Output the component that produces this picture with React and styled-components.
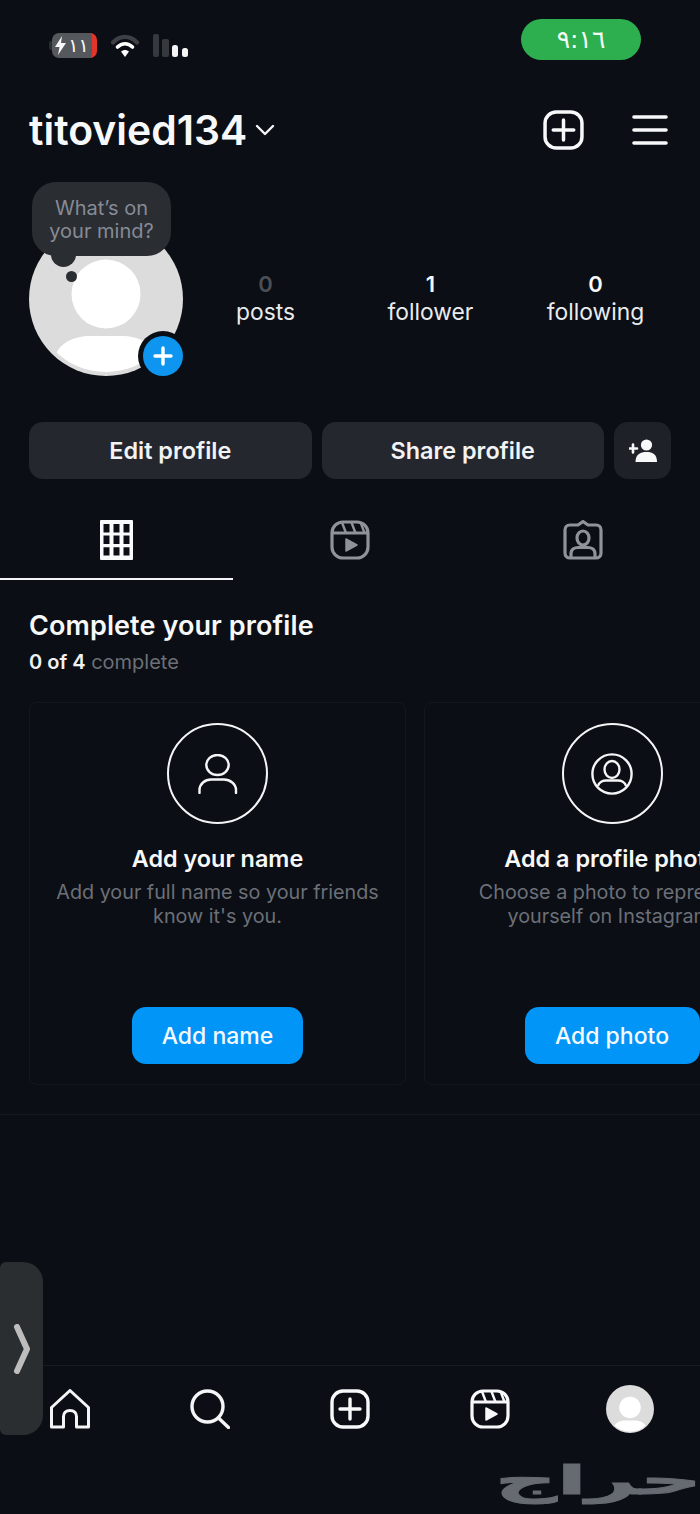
import React from "react";
import styled, { createGlobalStyle } from "styled-components";

const Global = createGlobalStyle`
  html, body { margin: 0; padding: 0; background: #0b0e14; }
  * { box-sizing: border-box; }
`;

const Page = styled.div`
  position: relative;
  width: 700px;
  height: 1514px;
  overflow: hidden;
  display: flex;
  flex-direction: column;
  background: #0b0e14;
  color: #f7f8f9;
  font-family: Inter, "Liberation Sans", sans-serif;
`;

const StatusBar = styled.div`
  display: flex;
  align-items: flex-start;
  padding: 19px 59px 0 49px;
  height: 60px;
`;
const StatusIcons = styled.div`
  display: flex;
  align-items: center;
  gap: 14px;
  margin-top: 14px;
`;
const Battery = styled.div`
  position: relative;
  width: 48px;
  height: 25px;
  padding-left: 3px;
  display: flex;
  align-items: center;
  &::before {
    content: "";
    position: absolute;
    left: 0;
    top: 8px;
    width: 3px;
    height: 9px;
    border-radius: 2px 0 0 2px;
    background: #2a2c30;
  }
`;
const BatteryBody = styled.div`
  flex: 1;
  height: 25px;
  border-radius: 7px;
  background: #55585c;
  border-right: 5px solid #e0352b;
  display: flex;
  align-items: center;
  justify-content: center;
  gap: 2px;
  font-family: "DejaVu Sans", sans-serif;
  font-size: 19px;
  line-height: 25px;
  color: #f7f7f7;
`;
const TimePill = styled.div`
  margin-left: auto;
  width: 120px;
  height: 41px;
  border-radius: 21px;
  background: #2daf4f;
  color: #f4fbf4;
  display: flex;
  align-items: center;
  justify-content: center;
  font-family: "DejaVu Sans", sans-serif;
  font-size: 25px;
  line-height: 41px;
`;

const Header = styled.header`
  display: flex;
  align-items: center;
  height: 44px;
  margin-top: 48px;
  padding: 0 32px 0 29px;
`;
const Username = styled.h1`
  margin: 0;
  font-size: 40.9px;
  line-height: 44px;
  font-weight: 600;
`;
const HeaderActions = styled.div`
  margin-left: auto;
  display: flex;
  align-items: center;
  gap: 48px;
`;

const ProfileRow = styled.section`
  display: flex;
  align-items: center;
  margin-top: 70px;
  padding-left: 29px;
`;
const AvatarWrap = styled.div`
  position: relative;
  width: 154px;
  height: 154px;
  flex: none;
`;
const Bubble = styled.div`
  position: absolute;
  left: 3px;
  top: -40px;
  width: 139px;
  height: 74px;
  border-radius: 24px;
  background: #2a2d32;
  color: #868b96;
  font-size: 20px;
  line-height: 23px;
  text-align: center;
  padding-top: 15px;
  &::before {
    content: "";
    position: absolute;
    left: 19px;
    top: 62px;
    width: 25px;
    height: 23px;
    border-radius: 0 0 13px 13px;
    background: #2a2d32;
  }
  &::after {
    content: "";
    position: absolute;
    left: 34px;
    top: 89px;
    width: 11px;
    height: 11px;
    border-radius: 50%;
    background: #2a2d32;
  }
`;
const BubbleText = styled.div`
  position: relative;
  z-index: 1;
`;
const AddBadge = styled.div`
  position: absolute;
  right: -5px;
  bottom: -5px;
  width: 50px;
  height: 50px;
  border-radius: 50%;
  background: #0b0e14;
  display: flex;
  align-items: center;
  justify-content: center;
  &::before {
    content: "";
    position: absolute;
    inset: 5px;
    border-radius: 50%;
    background: #0d95f0;
  }
  svg { position: relative; }
`;
const Stats = styled.div`
  display: grid;
  grid-template-columns: repeat(3, 165px);
  padding-bottom: 2px;
`;
const Stat = styled.div`
  text-align: center;
  display: flex;
  flex-direction: column;
  align-items: center;
  gap: 2px;
`;
const StatValue = styled.div`
  font-size: 22px;
  line-height: 26px;
  font-weight: 600;
  color: ${(p) => (p.$muted ? "#4c4f55" : "#f7f8f9")};
`;
const StatLabel = styled.div`
  font-size: 22.8px;
  line-height: 26px;
  color: #e9ebee;
`;

const ButtonRow = styled.div`
  display: flex;
  gap: 10px;
  margin-top: 46px;
  padding: 0 29px;
`;
const GreyButton = styled.div`
  flex: ${(p) => (p.$icon ? "0 0 57px" : "1")};
  height: 57px;
  border-radius: 14px;
  background: ${(p) => (p.$icon ? "#1e2128" : "#24272e")};
  display: flex;
  align-items: center;
  justify-content: center;
  font-size: 23.4px;
  font-weight: 600;
  color: #f2f3f5;
`;

const Tabs = styled.nav`
  display: grid;
  grid-template-columns: repeat(3, 1fr);
  margin-top: 21px;
`;
const Tab = styled.div`
  height: 80px;
  padding-top: 20px;
  display: flex;
  justify-content: center;
  align-items: flex-start;
  border-bottom: 2px solid ${(p) => (p.$active ? "#f4f5f6" : "transparent")};
`;

const Section = styled.section`
  padding: 30px 0 0 29px;
`;
const SectionTitle = styled.h2`
  margin: 0;
  font-size: 27px;
  line-height: 32px;
  font-weight: 600;
  letter-spacing: 0.1px;
`;
const Progress = styled.p`
  margin: 7px 0 0;
  font-size: 20px;
  line-height: 26px;
  color: #6c7078;
  b { font-weight: 600; color: #eef0f2; }
`;
const CardRow = styled.div`
  display: flex;
  gap: 18px;
  margin-top: 27px;
`;
const Card = styled.article`
  flex: none;
  width: ${(p) => p.$w}px;
  height: 383px;
  border: 1px solid #14171e;
  border-radius: 8px;
  padding-top: 20px;
  display: flex;
  flex-direction: column;
  align-items: center;
  text-align: center;
`;
const IconCircle = styled.div`
  width: 101px;
  height: 101px;
  border-radius: 50%;
  border: 2.5px solid #f4f5f6;
  display: flex;
  align-items: center;
  justify-content: center;
`;
const CardTitle = styled.h3`
  margin: 20px 0 0;
  font-size: 23.4px;
  line-height: 30px;
  font-weight: 600;
  white-space: nowrap;
`;
const CardText = styled.p`
  margin: 6px 0 0;
  font-size: 19.75px;
  line-height: 24px;
  color: #6c7078;
  white-space: nowrap;
`;
const BlueButton = styled.div`
  margin-top: auto;
  margin-bottom: 20px;
  width: ${(p) => p.$w}px;
  height: 57px;
  border-radius: 14px;
  background: #0095f6;
  display: flex;
  align-items: center;
  justify-content: center;
  font-size: 23px;
  font-weight: 500;
  color: #f4f9fe;
`;
const Divider = styled.hr`
  margin: 29px 0 0;
  border: 0;
  border-top: 1px solid #15181f;
`;

const BottomNav = styled.nav`
  margin-top: auto;
  height: 149px;
  border-top: 1px solid #181b22;
  padding-top: 23px;
  display: grid;
  grid-template-columns: repeat(5, 140px);
  align-items: start;
  justify-items: center;
`;
const NavAvatar = styled.div`
  margin-top: -4px;
`;
const SideHandle = styled.div`
  position: absolute;
  left: 0;
  top: 1262px;
  width: 43px;
  height: 173px;
  border-radius: 6px 20px 20px 6px;
  background: #2b2e31;
  display: flex;
  align-items: center;
  padding-left: 12px;
`;
const Watermark = styled.div`
  position: absolute;
  left: 502px;
  top: 1457px;
  width: 193px;
  height: 46px;
  display: flex;
  align-items: center;
  justify-content: center;
  direction: rtl;
  font-family: "DejaVu Sans", sans-serif;
  font-weight: 700;
  font-size: 40px;
  line-height: 46px;
  color: #666a71;
  -webkit-text-stroke: 1px #666a71;
  white-space: nowrap;
  transform: scaleX(2.15);
`;

const Wifi = () => (
  <svg width="28" height="24" viewBox="0 0 28 24" fill="none" strokeLinecap="round">
    <path d="M2 8.5 C9 1 19 1 26 8.5" stroke="#3c3f43" strokeWidth="4.4" />
    <path d="M6.5 13 C11 8.6 17 8.6 21.5 13" stroke="#fff" strokeWidth="3.6" />
    <path d="M10 17.5 L14 23 L18 17.5 C15.5 15.4 12.5 15.4 10 17.5Z" fill="#fff" />
  </svg>
);
const Signal = () => (
  <svg width="36" height="23" viewBox="0 0 36 23">
    <rect x="0" y="0" width="6" height="23" rx="2" fill="#35383c" />
    <rect x="9" y="5" width="7" height="18" rx="2" fill="#35383c" />
    <rect x="19" y="11" width="6" height="12" rx="2.5" fill="#f4f4f4" />
    <rect x="29" y="14" width="6" height="9" rx="2.5" fill="#f4f4f4" />
  </svg>
);
const Bolt = () => (
  <svg width="11" height="19" viewBox="0 0 11 19">
    <path d="M7 0 L0 11 H4.5 L3 19 L11 7 H6Z" fill="#f7f7f7" />
  </svg>
);
const Chevron = () => (
  <svg width="20" height="12" viewBox="0 0 20 12" fill="none" stroke="#f4f5f6" strokeWidth="2.4" strokeLinecap="round" strokeLinejoin="round" style={{ marginLeft: 8, marginTop: -1 }}>
    <path d="M2 2 L10 10 L18 2" />
  </svg>
);
const PlusSquare = ({ w = 40, h = 40 }) => (
  <svg width={w} height={h} viewBox="0 0 40 40" fill="none" stroke="#f7f8f9" strokeWidth="3.4" strokeLinecap="round" preserveAspectRatio="none">
    <rect x="2" y="2" width="36" height="36" rx="11" />
    <path d="M20 10 V30 M10 20 H30" />
  </svg>
);
const Menu = () => (
  <svg width="36" height="30" viewBox="0 0 36 30" stroke="#f7f8f9" strokeWidth="3.6" strokeLinecap="round">
    <path d="M2 2 H34 M2 15 H34 M2 28 H34" />
  </svg>
);
const DefaultAvatar = ({ size }) => (
  <svg width={size} height={size} viewBox="0 0 154 154" style={{ display: "block" }}>
    <defs>
      <clipPath id={`c${size}`}><circle cx="77" cy="77" r="73" /></clipPath>
    </defs>
    <circle cx="77" cy="77" r="77" fill="#dcdcdc" />
    <circle cx="77" cy="72" r="34.5" fill="#fff" />
    <g clipPath={`url(#c${size})`}>
      <path d="M26 136 C28 122 44 114 62 114 H92 C110 114 126 122 128 136 V154 H26Z" fill="#fff" />
    </g>
  </svg>
);
const AddPerson = () => (
  <svg width="28" height="23" viewBox="0 0 28 23" fill="#f7f8f9">
    <circle cx="17.5" cy="6" r="5.6" />
    <path d="M6.5 23 C6.5 15.5 11 13 17.5 13 C24 13 28 15.5 28 23Z" />
    <path d="M0 9.5 H8 M4 5.5 V13.5" stroke="#f7f8f9" strokeWidth="2.6" strokeLinecap="round" />
  </svg>
);
const cell = (x, y) => `M${x} ${y} V${y + 8.4} H${x + 6} V${y}Z`;
const GridIcon = () => {
  const xs = [3.5, 13.5, 23.5];
  const ys = [4, 15.6, 27.2];
  const cells = ys.flatMap((y) => xs.map((x) => cell(x, y))).join(" ");
  return (
    <svg width="33" height="40" viewBox="0 0 33 40" style={{ display: "block" }}>
      <path
        fillRule="evenodd"
        fill="#f9fafb"
        d={`M1 0 H32 a1 1 0 0 1 1 1 V39 a1 1 0 0 1 -1 1 H1 a1 1 0 0 1 -1 -1 V1 a1 1 0 0 1 1 -1Z ${cells}`}
      />
    </svg>
  );
};
const ReelIcon = ({ color }) => (
  <svg width="40" height="40" viewBox="0 0 40 40" fill="none" stroke={color} strokeWidth="3.2" strokeLinejoin="round" style={{ display: "block" }}>
    <rect x="2" y="2" width="36" height="36" rx="11" />
    <path d="M2.5 13 H37.5" />
    <path d="M12 2.5 L16 13 M21.5 2.5 L25.5 13 M31 3.5 L34.5 13" strokeWidth="2.4" />
    <path d="M16 19 L27 25 L16 31Z" fill={color} strokeWidth="1.5" />
  </svg>
);
const TagIcon = () => (
  <svg width="40" height="40" viewBox="0 0 40 40" fill="none" stroke="#8f939a" strokeWidth="3.2" strokeLinejoin="round" style={{ display: "block" }}>
    <path d="M7 5 H15 L20 1.5 L25 5 H33 C36 5 38 7 38 10 V33 C38 36 36 38 33 38 H7 C4 38 2 36 2 33 V10 C2 7 4 5 7 5Z" />
    <ellipse cx="20" cy="18" rx="6" ry="7" />
    <path d="M8 37 V34 C8 29 12 27.5 15 27.5 H25 C28 27.5 32 29 32 34 V37" />
  </svg>
);
const PersonLine = () => (
  <svg width="40" height="40" viewBox="0 0 40 40" fill="none" stroke="#f4f5f6" strokeWidth="2.4" strokeLinecap="round" style={{ display: "block" }}>
    <ellipse cx="19.5" cy="11" rx="11.2" ry="10" />
    <path d="M1.5 39 V36 C1.5 30 7 25.5 13 25.5 H26 C32 25.5 38 30 38 36 V39" />
  </svg>
);
const PersonCircle = () => (
  <svg width="42" height="42" viewBox="0 0 42 42" fill="none" stroke="#f4f5f6" strokeWidth="2.4" style={{ display: "block" }}>
    <circle cx="21" cy="21" r="19.6" />
    <ellipse cx="21" cy="16.5" rx="7.5" ry="8.5" />
    <path d="M7 33 C8 29 12 27.5 15 27.5 H27 C30 27.5 34 29 35 33" />
  </svg>
);
const HomeIcon = () => (
  <svg width="40" height="40" viewBox="0 0 40 40" fill="none" stroke="#f4f5f6" strokeWidth="3" strokeLinejoin="round" style={{ display: "block" }}>
    <path d="M20 1.5 L38.5 18.5 V38 H26.5 V27.5 C26.5 24 24 21.5 20 21.5 C16 21.5 13.5 24 13.5 27.5 V38 H1.5 V18.5Z" />
  </svg>
);
const SearchIcon = () => (
  <svg width="40" height="40" viewBox="0 0 40 40" fill="none" stroke="#f4f5f6" strokeWidth="3.4" strokeLinecap="round" style={{ display: "block" }}>
    <circle cx="17.5" cy="17.5" r="15.5" />
    <path d="M28.5 29 L38.5 38.5" />
  </svg>
);
const HandleChevron = () => (
  <svg width="20" height="50" viewBox="0 0 20 50" fill="none" stroke="#bdbdbd" strokeWidth="6" strokeLinecap="round" strokeLinejoin="round" style={{ display: "block" }}>
    <path d="M5 3 L15 25 L5 47" />
  </svg>
);
const SmallPlus = () => (
  <svg width="20" height="20" viewBox="0 0 20 20" stroke="#fff" strokeWidth="3.4" strokeLinecap="round">
    <path d="M10 2 V18 M2 10 H18" />
  </svg>
);

export default function App() {
  return (
    <Page>
      <Global />
      <StatusBar>
        <StatusIcons>
          <Battery>
            <BatteryBody dir="ltr">
              <Bolt />
              <span>١١</span>
            </BatteryBody>
          </Battery>
          <Wifi />
          <Signal />
        </StatusIcons>
        <TimePill>٩:١٦</TimePill>
      </StatusBar>

      <Header>
        <Username>titovied134</Username>
        <Chevron />
        <HeaderActions>
          <PlusSquare w={41} h={40} />
          <Menu />
        </HeaderActions>
      </Header>

      <ProfileRow>
        <AvatarWrap>
          <DefaultAvatar size={154} />
          <Bubble>
            <BubbleText>What’s on<br />your mind?</BubbleText>
          </Bubble>
          <AddBadge><SmallPlus /></AddBadge>
        </AvatarWrap>
        <Stats>
          <Stat><StatValue $muted>0</StatValue><StatLabel>posts</StatLabel></Stat>
          <Stat><StatValue>1</StatValue><StatLabel>follower</StatLabel></Stat>
          <Stat><StatValue>0</StatValue><StatLabel>following</StatLabel></Stat>
        </Stats>
      </ProfileRow>

      <ButtonRow>
        <GreyButton>Edit profile</GreyButton>
        <GreyButton>Share profile</GreyButton>
        <GreyButton $icon><AddPerson /></GreyButton>
      </ButtonRow>

      <Tabs>
        <Tab $active><GridIcon /></Tab>
        <Tab><ReelIcon color="#8f939a" /></Tab>
        <Tab><TagIcon /></Tab>
      </Tabs>

      <Section>
        <SectionTitle>Complete your profile</SectionTitle>
        <Progress><b>0 of 4</b> complete</Progress>
        <CardRow>
          <Card $w={377}>
            <IconCircle><PersonLine /></IconCircle>
            <CardTitle>Add your name</CardTitle>
            <CardText>Add your full name so your friends<br />know it's you.</CardText>
            <BlueButton $w={171}>Add name</BlueButton>
          </Card>
          <Card $w={376}>
            <IconCircle><PersonCircle /></IconCircle>
            <CardTitle>Add a profile photo</CardTitle>
            <CardText>Choose a photo to represent<br />yourself on Instagram.</CardText>
            <BlueButton $w={175}>Add photo</BlueButton>
          </Card>
        </CardRow>
      </Section>
      <Divider />

      <BottomNav>
        <HomeIcon />
        <SearchIcon />
        <PlusSquare />
        <ReelIcon color="#f7f8f9" />
        <NavAvatar><DefaultAvatar size={48} /></NavAvatar>
      </BottomNav>

      <SideHandle><HandleChevron /></SideHandle>
      <Watermark>حراج</Watermark>
    </Page>
  );
}
